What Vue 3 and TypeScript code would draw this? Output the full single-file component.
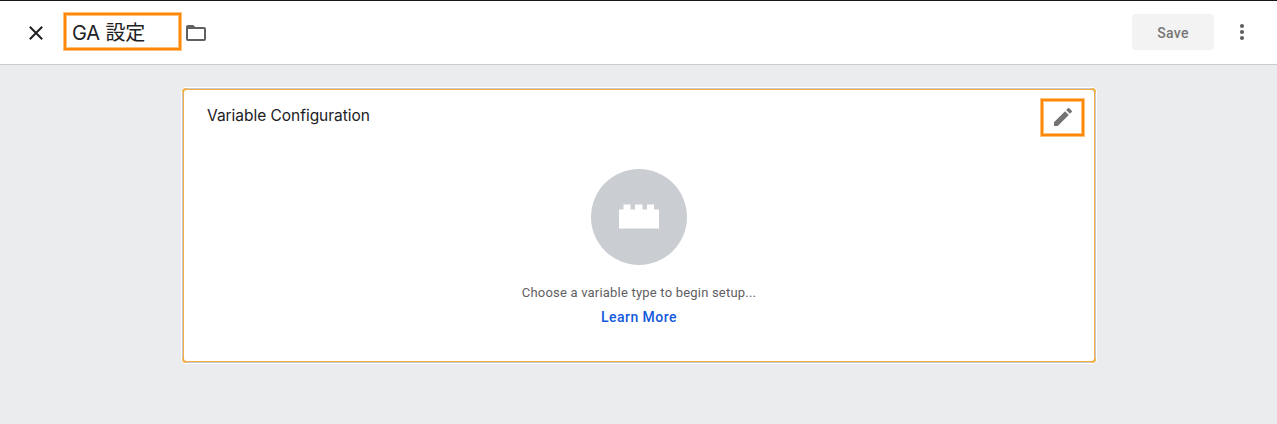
<script setup lang="ts">
const variableName: { latin: string; kanji: string } = { latin: 'GA', kanji: '設定' }
const cardTitle = 'Variable Configuration'
</script>

<template>
  <div class="page">
    <header class="bar">
      <button class="icon close" aria-label="Close">
        <svg width="24" height="24" viewBox="0 0 24 24"><path d="M5.8 5.8 18.2 18.2M18.2 5.8 5.8 18.2" fill="none" stroke="#202124" stroke-width="2" /></svg>
      </button>
      <div class="name marked"><span>{{ variableName.latin }} {{ variableName.kanji }}</span></div>
      <svg class="folder" width="24" height="24" viewBox="0 0 24 24">
        <path fill="#5f6062" fill-rule="evenodd" d="M4 4h5.2l2 2H20a2 2 0 0 1 2 2v10a2 2 0 0 1-2 2H4a2 2 0 0 1-2-2V6a2 2 0 0 1 2-2zM4 8v10h16V8z" />
      </svg>
      <button class="save">Save</button>
      <svg class="more" width="24" height="24" viewBox="0 0 24 24" fill="#5f6062">
        <circle cx="12" cy="6" r="2.1" /><circle cx="12" cy="12" r="2.1" /><circle cx="12" cy="18" r="2.1" />
      </svg>
    </header>
    <main>
      <section class="card">
        <div class="head">
          <h2>{{ cardTitle }}</h2>
          <button class="icon edit marked" aria-label="Edit">
            <svg width="24" height="24" viewBox="0 0 24 24"><path fill="#737373" d="M3 17.25V21h3.75L17.81 9.94l-3.75-3.75L3 17.25zM20.71 7.04a1 1 0 0 0 0-1.41l-2.34-2.34a1 1 0 0 0-1.41 0l-1.83 1.83 3.75 3.75 1.83-1.83z" /></svg>
          </button>
        </div>
        <div class="empty">
          <svg width="96" height="96" viewBox="0 0 96 96">
            <circle cx="48" cy="48" r="48" fill="#cacdd2" />
            <path fill="#fff" d="M28 40.5h4.5v-5h7v5h4.5v-5h7.5v5h4.5v-5h7v5H68v19H28z" />
          </svg>
          <p>Choose a variable type to begin setup...</p>
          <a>Learn More</a>
        </div>
      </section>
    </main>
  </div>
</template>

<style>
body { margin: 0; }
</style>

<style scoped>
.page {
  box-sizing: border-box;
  height: 424px;
  overflow: hidden;
  background: #ebecee;
  border-top: 1px solid #17171a;
  font-family: Roboto, "Noto Sans CJK JP", sans-serif;
}
.bar {
  box-sizing: border-box;
  height: 64px;
  display: flex;
  align-items: center;
  padding: 0 23px 1px 24px;
  background: #fff;
  border-bottom: 1px solid #c9cbd1;
}
button { border: 0; padding: 0; background: none; font-family: inherit; }
svg { display: block; flex: none; }
.close,
.folder { margin-top: 2px; }
.marked {
  box-sizing: border-box;
  border: 2px solid #ff8707;
  box-shadow: 0 0 0 1px #ffc27c, inset 0 0 0 1px #ffc27c;
}
.name {
  width: 117px;
  height: 37px;
  margin: 0 3px 1px 16px;
  padding: 2px 0 0 6px;
  font: 20px/33px Inter, "Noto Sans CJK JP", sans-serif;
  color: #202124;
  white-space: nowrap;
}
.name span { letter-spacing: -0.15px; }
.save {
  box-sizing: border-box;
  width: 82px;
  height: 36px;
  margin: 0 16px 0 auto;
  padding-top: 2px;
  border-radius: 4px;
  background: #f3f3f3;
  color: #777;
  font-size: 14px;
  font-weight: 500;
  letter-spacing: .35px;
}
main { padding: 23px 181px 0 182px; }
.card {
  position: relative;
  isolation: isolate;
  height: 275px;
  border-radius: 4px;
  background: #f2ae43;
  box-shadow: 0 0 0 1px #fff;
}
.card::before,
.card::after {
  content: "";
  position: absolute;
  z-index: -1;
}
.card::before {
  inset: 0;
  border: 1px solid #c5c8cd;
  border-radius: 7px;
  background: #fff;
}
.card::after {
  inset: 1px;
  border: 1px solid #f2ae43;
  border-radius: 3px;
}
.head {
  display: flex;
  justify-content: space-between;
  padding: 11px 12px 0 25px;
}
h2 {
  margin: 6px 0 0;
  font: 15.5px/22px Inter, sans-serif;
  letter-spacing: -.03px;
  color: #202124;
}
.edit {
  width: 43px;
  height: 37px;
  display: flex;
  align-items: center;
  justify-content: center;
  padding-bottom: 1px;
}
.empty {
  display: flex;
  flex-direction: column;
  align-items: center;
  padding-top: 33px;
}
p {
  margin: 19px 0 0;
  font-size: 13px;
  line-height: 18px;
  letter-spacing: .2px;
  color: #5f6062;
}
a {
  margin-top: 5px;
  font-size: 14px;
  line-height: 20px;
  font-weight: 500;
  letter-spacing: .45px;
  color: #1259dc;
}
</style>
